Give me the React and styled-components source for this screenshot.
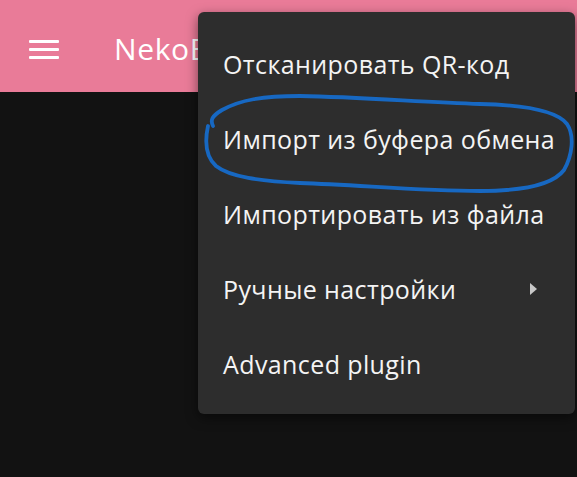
import React from "react";
import styled, { createGlobalStyle } from "styled-components";

const Global = createGlobalStyle`
  html, body {
    margin: 0;
    padding: 0;
    background: #121212;
    height: 100%;
  }
  #root {
    height: 100%;
  }
`;

const Screen = styled.div`
  position: relative;
  width: 577px;
  height: 477px;
  overflow: hidden;
  background: #121212;
  font-family: "Open Sans", "Noto Sans", sans-serif;
`;

const AppBar = styled.header`
  height: 92px;
  background: #e97b98;
  display: flex;
  align-items: center;
  padding-left: 29px;
  gap: 55px;
  box-sizing: border-box;
`;

const MenuButton = styled.div`
  width: 30px;
  height: 19px;
  display: flex;
  flex-direction: column;
  justify-content: space-between;
  margin-top: 6px;
  > span {
    display: block;
    height: 3px;
    background: #fff;
    border-radius: 1px;
  }
`;

const Title = styled.h1`
  margin: 0;
  padding-top: 4px;
  color: #fff;
  font-size: 30px;
  font-weight: 400;
  letter-spacing: 0.6px;
  white-space: nowrap;
`;

const Menu = styled.ul`
  position: absolute;
  top: 12px;
  left: 198px;
  width: 377px;
  margin: 0;
  padding: 14px 0 13px;
  list-style: none;
  background: #2d2d2d;
  border-radius: 6px;
  box-shadow: 0 4px 12px rgba(0, 0, 0, 0.5);
  box-sizing: border-box;
`;

const Item = styled.li`
  height: 75px;
  display: flex;
  align-items: center;
  justify-content: space-between;
  padding: 0 38px 0 25px;
  color: #f4f4f4;
  font-size: 25px;
  letter-spacing: 0.4px;
  white-space: nowrap;
`;

const Arrow = styled.span`
  width: 0;
  height: 0;
  border-top: 6px solid transparent;
  border-bottom: 6px solid transparent;
  border-left: 7px solid #c8c8c8;
`;

const Scribble = styled.svg`
  position: absolute;
  left: 0;
  top: 0;
  pointer-events: none;
`;

const items = [
  { label: "Отсканировать QR-код" },
  { label: "Импорт из буфера обмена" },
  { label: "Импортировать из файла" },
  { label: "Ручные настройки", sub: true },
  { label: "Advanced plugin" },
];

export default function App() {
  return (
    <Screen>
      <Global />
      <AppBar>
        <MenuButton>
          <span />
          <span />
          <span />
        </MenuButton>
        <Title>NekoBox</Title>
      </AppBar>
      <Menu>
        {items.map((it) => (
          <Item key={it.label}>
            {it.label}
            {it.sub && <Arrow />}
          </Item>
        ))}
      </Menu>
      <Scribble width="577" height="477" viewBox="0 0 577 477">
        <path
          d="M213 126 C210 120 212 116 222 110 C240 100 262 96 300 96 C360 97 420 102 480 104 C522 105 556 110 567 124 C575 136 572 156 564 170 C552 186 520 191 480 191 C420 191 360 185 300 183 C260 181 230 177 216 166 C205 156 205 140 208 126"
          fill="none"
          stroke="#1768c2"
          strokeWidth="3.8"
          strokeLinecap="round"
          strokeLinejoin="round"
        />
      </Scribble>
    </Screen>
  );
}
